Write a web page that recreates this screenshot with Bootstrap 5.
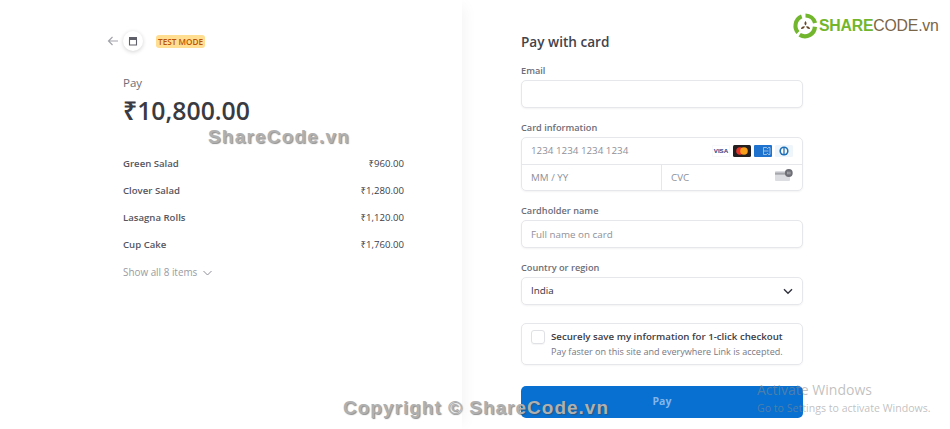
<!DOCTYPE html>
<html lang="en">
<head>
    <meta charset="UTF-8">
    <meta name="viewport" content="width=device-width, initial-scale=1.0">
    <title>Checkout</title>
    <link href="https://cdn.jsdelivr.net/npm/bootstrap@5.3.0/dist/css/bootstrap.min.css" rel="stylesheet">
    <style>
        html, body { height: 429px; overflow: hidden; }
        body { font-family: "Open Sans", "Noto Sans", sans-serif; color: #30313d; background: #fff; position: relative; }
        .summary-pane { width: 462px; height: 429px; padding: 31px 58px 0 107px; flex: none; box-shadow: 8px 0 14px -6px rgba(0,0,0,.05); }
        .back-row { height: 20px; }
        .shop-dot { width: 20px; height: 20px; border-radius: 50%; box-shadow: 0 1px 4px rgba(0,0,0,.18); margin-left: 4px; }
        .test-tag { margin-left: 13px; background: #ffde92; color: #bb5504; font-size: 8.2px; font-weight: 600; line-height: 13px; height: 13px; padding: 0 2px; border-radius: 3px; }
        .summary-body { padding-left: 16px; }
        .pay-word { font-size: 11.5px; color: #6d6e78; margin-top: 24px; line-height: 16px; }
        .pay-total { font-size: 24.8px; font-weight: 600; line-height: 34px; margin-top: 2px; color: #3a3b42; }
        .line-list { margin-top: 24px; }
        .line-row { height: 27px; font-size: 9.6px; font-weight: 600; color: #55565f; align-items: center; }
        .line-row .price { font-size: 9.6px; font-weight: 400; color: #3c3d48; }
        .show-all { font-size: 9.9px; color: #9a9ba3; height: 27px; gap: 6px; }
        .pay-pane { padding: 33px 0 0 59px; width: 341px; flex: none; }
        .pay-title { font-size: 13.6px; font-weight: 600; line-height: 18px; margin: 0 0 13px; color: #42434b; }
        .field-label { font-size: 9.2px; font-weight: 600; color: #6c6d77; line-height: 13px; margin-bottom: 3px; display: block; }
        .box-input { height: 28px; border: 1px solid #e6e7ea; border-radius: 5px; box-shadow: 0 1px 2px rgba(0,0,0,.05); font-size: 9.8px; padding: 0 9px; color: #30313d; background: #fff; }
        .box-input::placeholder, .card-part { color: #8f9099; }
        .field-gap { margin-bottom: 13px; }
        .card-box { height: 54px; border: 1px solid #e6e7ea; border-radius: 5px; box-shadow: 0 1px 2px rgba(0,0,0,.05); font-size: 9.8px; }
        .card-part { height: 26px; padding: 0 9px; }
        .card-mid { border-top: 1px solid #e6e7ea; }
        .card-split { width: 140px; border-right: 1px solid #e6e7ea; }
        .brand-row { gap: 3px; }
        .brand-row svg { display: block; }
        .cvc-art { align-self: flex-start; margin-top: 4px; }
        .select-box { height: 28px; border: 1px solid #e6e7ea; border-radius: 5px; box-shadow: 0 1px 2px rgba(0,0,0,.05); font-size: 9.8px; padding: 0 9px; }
        .save-box { height: 42px; margin-top: 18px; border: 1px solid #e6e7ea; border-radius: 5px; box-shadow: 0 1px 2px rgba(0,0,0,.04); padding: 5px 9px; }
        .tick-box { width: 14px; height: 14px; border: 1px solid #e0e1e5; border-radius: 3px; margin: 1px 6px 0 0; box-shadow: 0 1px 1px rgba(0,0,0,.04); flex: none; }
        .save-head { font-size: 9.7px; font-weight: 600; line-height: 15px; color: #3b3c46; white-space: nowrap; }
        .save-sub { font-size: 9.05px; line-height: 15px; color: #777883; white-space: nowrap; }
        .pay-btn { width: 282px; height: 32px; margin-top: 21px; padding: 0; border: 0; border-radius: 5px; background: #0770d0; color: #82b6ea; font-size: 10.5px; font-weight: 700; }
        .logo-mark { position: absolute; left: 792px; top: 12px; display: flex; align-items: center; }
        .logo-text { font-family: "Liberation Sans", sans-serif; font-size: 15.8px; line-height: 26px; letter-spacing: -.2px; color: #7a6548; white-space: nowrap; }
        .logo-text b { color: #72b62d; }
        .mark-mid, .mark-foot { position: absolute; font-family: "Liberation Sans", sans-serif; font-weight: 700; color: #b0b0b0; text-shadow: 1px 1px 1px rgba(70,70,70,.6); white-space: nowrap; font-size: 19px; }
        .mark-mid { left: 208px; top: 123px; letter-spacing: 1.2px; }
        .mark-foot { left: 343px; top: 394px; letter-spacing: 1px; }
        .activate { position: absolute; left: 757px; top: 381px; color: rgba(140,140,140,.55); font-family: "Open Sans", sans-serif; white-space: nowrap; }
        .activate div:first-child { font-size: 14px; line-height: 18px; }
        .activate div:last-child { font-size: 10.6px; line-height: 14px; margin-top: 2px; }
    </style>
</head>
<body class="d-flex">
    <div class="summary-pane">
        <div class="back-row d-flex align-items-center">
            <svg width="12" height="12" viewBox="0 0 12 12" fill="none" stroke="#a3a4ab" stroke-width="1.2"><path d="M11 6H1.500M5.500 2 1.500 6l4 4"/></svg>
            <div class="shop-dot d-flex align-items-center justify-content-center">
                <svg width="10" height="10" viewBox="0 0 10 10"><path d="M1 1h8v2.600H1z" fill="#5e5f68"/><path d="M1.500 3.500h7V9h-7z" fill="none" stroke="#5e5f68" stroke-width="1.1"/></svg>
            </div>
            <span class="test-tag">TEST MODE</span>
        </div>
        <div class="summary-body">
            <div class="pay-word">Pay</div>
            <div class="pay-total">₹10,800.00</div>
            <div class="line-list">
                <div class="line-row d-flex justify-content-between"><span>Green Salad</span><span class="price">₹960.00</span></div>
                <div class="line-row d-flex justify-content-between"><span>Clover Salad</span><span class="price">₹1,280.00</span></div>
                <div class="line-row d-flex justify-content-between"><span>Lasagna Rolls</span><span class="price">₹1,120.00</span></div>
                <div class="line-row d-flex justify-content-between"><span>Cup Cake</span><span class="price">₹1,760.00</span></div>
                <div class="show-all d-flex align-items-center">Show all 8 items
                    <svg width="9" height="6" viewBox="0 0 9 6" fill="none" stroke="#8d8e98"><path d="M.5 1 4.500 5l4-4"/></svg>
                </div>
            </div>
        </div>
    </div>

    <div class="pay-pane">
        <h2 class="pay-title">Pay with card</h2>
        <form>
            <div class="field-gap">
                <label class="field-label" for="email">Email</label>
                <input class="box-input w-100 d-block" id="email" type="text">
            </div>
            <div class="field-gap">
                <span class="field-label">Card information</span>
                <div class="card-box">
                    <div class="card-part d-flex align-items-center justify-content-between">
                        <span>1234 1234 1234 1234</span>
                        <span class="brand-row d-flex">
                            <svg width="18" height="12" viewBox="0 0 18 12"><rect x=".25" y=".25" width="17.500" height="11.500" rx="1.500" fill="#fff" stroke="#eceef1" stroke-width=".5"/><text x="9" y="8.400" text-anchor="middle" font-size="6.200" font-weight="700" fill="#23408a" font-family="Liberation Sans">VISA</text></svg>
                            <svg width="18" height="12" viewBox="0 0 18 12"><rect width="18" height="12" rx="1.500" fill="#231f20"/><circle cx="7" cy="6" r="3.800" fill="#e5332a"/><circle cx="11" cy="6" r="3.800" fill="#f79e1b"/></svg>
                            <svg width="18" height="12" viewBox="0 0 18 12"><rect width="18" height="12" rx="1" fill="#1f72cd"/><path d="M9.500 2.500h3l1 1.200 1-1.200h1.500v7h-1.500l-1-1.200-1 1.200h-3z" fill="none" stroke="#c5def5" stroke-width=".7"/><path d="M9.500 6h5" stroke="#c5def5" stroke-width=".7"/></svg>
                            <svg width="18" height="12" viewBox="0 0 18 12"><rect width="18" height="12" rx="1.500" fill="#eef5fb"/><circle cx="9" cy="6" r="4.600" fill="#1d6fb5"/><circle cx="9" cy="6" r="3" fill="#fff"/><path d="M9 3v6" stroke="#1d6fb5" stroke-width="1.300"/></svg>
                        </span>
                    </div>
                    <div class="card-mid d-flex">
                        <div class="card-part card-split d-flex align-items-center">MM / YY</div>
                        <div class="card-part flex-grow-1 d-flex align-items-center justify-content-between">
                            <span>CVC</span>
                            <svg class="cvc-art" width="18" height="13" viewBox="0 0 18 13"><rect x="0" y="2" width="15" height="10" rx="1" fill="#dcdde0"/><rect x="0" y="3.500" width="15" height="2.200" fill="#a6a7ad"/><circle cx="13.800" cy="4" r="3.900" fill="#6d6e76"/><path d="M12.600 2.600v2.800M13.800 2.600v2.800M15 2.600v2.800" stroke="#e0e0e0" stroke-width=".5"/></svg>
                        </div>
                    </div>
                </div>
            </div>
            <div class="field-gap">
                <label class="field-label" for="holder">Cardholder name</label>
                <input class="box-input w-100 d-block" id="holder" type="text" placeholder="Full name on card">
            </div>
            <div>
                <span class="field-label">Country or region</span>
                <div class="select-box d-flex align-items-center justify-content-between">
                    <span>India</span>
                    <svg width="10" height="7" viewBox="0 0 10 7" fill="none" stroke="#30313d" stroke-width="1.400"><path d="M1 1.200 5 5.200l4-4"/></svg>
                </div>
            </div>
            <div class="save-box d-flex">
                <span class="tick-box"></span>
                <div>
                    <div class="save-head">Securely save my information for 1-click checkout</div>
                    <div class="save-sub">Pay faster on this site and everywhere Link is accepted.</div>
                </div>
            </div>
            <button class="pay-btn d-block" type="button">Pay</button>
        </form>
    </div>

    <div class="logo-mark">
        <svg width="27" height="27" viewBox="0 0 27 27">
            <path d="M13.500 1.500a12 12 0 0 1 11.600 9l-4 1a8 8 0 0 0-7.600-6z" fill="#72b62d"/>
            <path d="M25 15a12 12 0 0 1-6 9.800 12 12 0 0 1-12.500-.3l2.300-3.400a8 8 0 0 0 12-6.600z" fill="#72b62d"/>
            <path d="M4.500 22A12 12 0 0 1 1.600 12 12 12 0 0 1 9 2.500l1.400 3.800A8 8 0 0 0 7.500 19z" fill="#72b62d"/>
            <path d="M13.500 9c1.400 1.500 1.400 3 0 4.600-1.400-1.600-1.400-3.100 0-4.600zM9 17c.3-2 1.600-3 3.800-2.700-.3 2-1.600 3-3.800 2.700zM18 17c-2.200.3-3.500-.7-3.800-2.700 2.200-.3 3.500.7 3.800 2.700z" fill="#69482a"/>
        </svg>
        <span class="logo-text"><b>SHARE</b>CODE.vn</span>
    </div>
    <div class="mark-mid">ShareCode.vn</div>
    <div class="mark-foot">Copyright © ShareCode.vn</div>
    <div class="activate"><div>Activate Windows</div><div>Go to Settings to activate Windows.</div></div>

    <script src="https://cdn.jsdelivr.net/npm/bootstrap@5.3.0/dist/js/bootstrap.bundle.min.js"></script>
</body>
</html>
